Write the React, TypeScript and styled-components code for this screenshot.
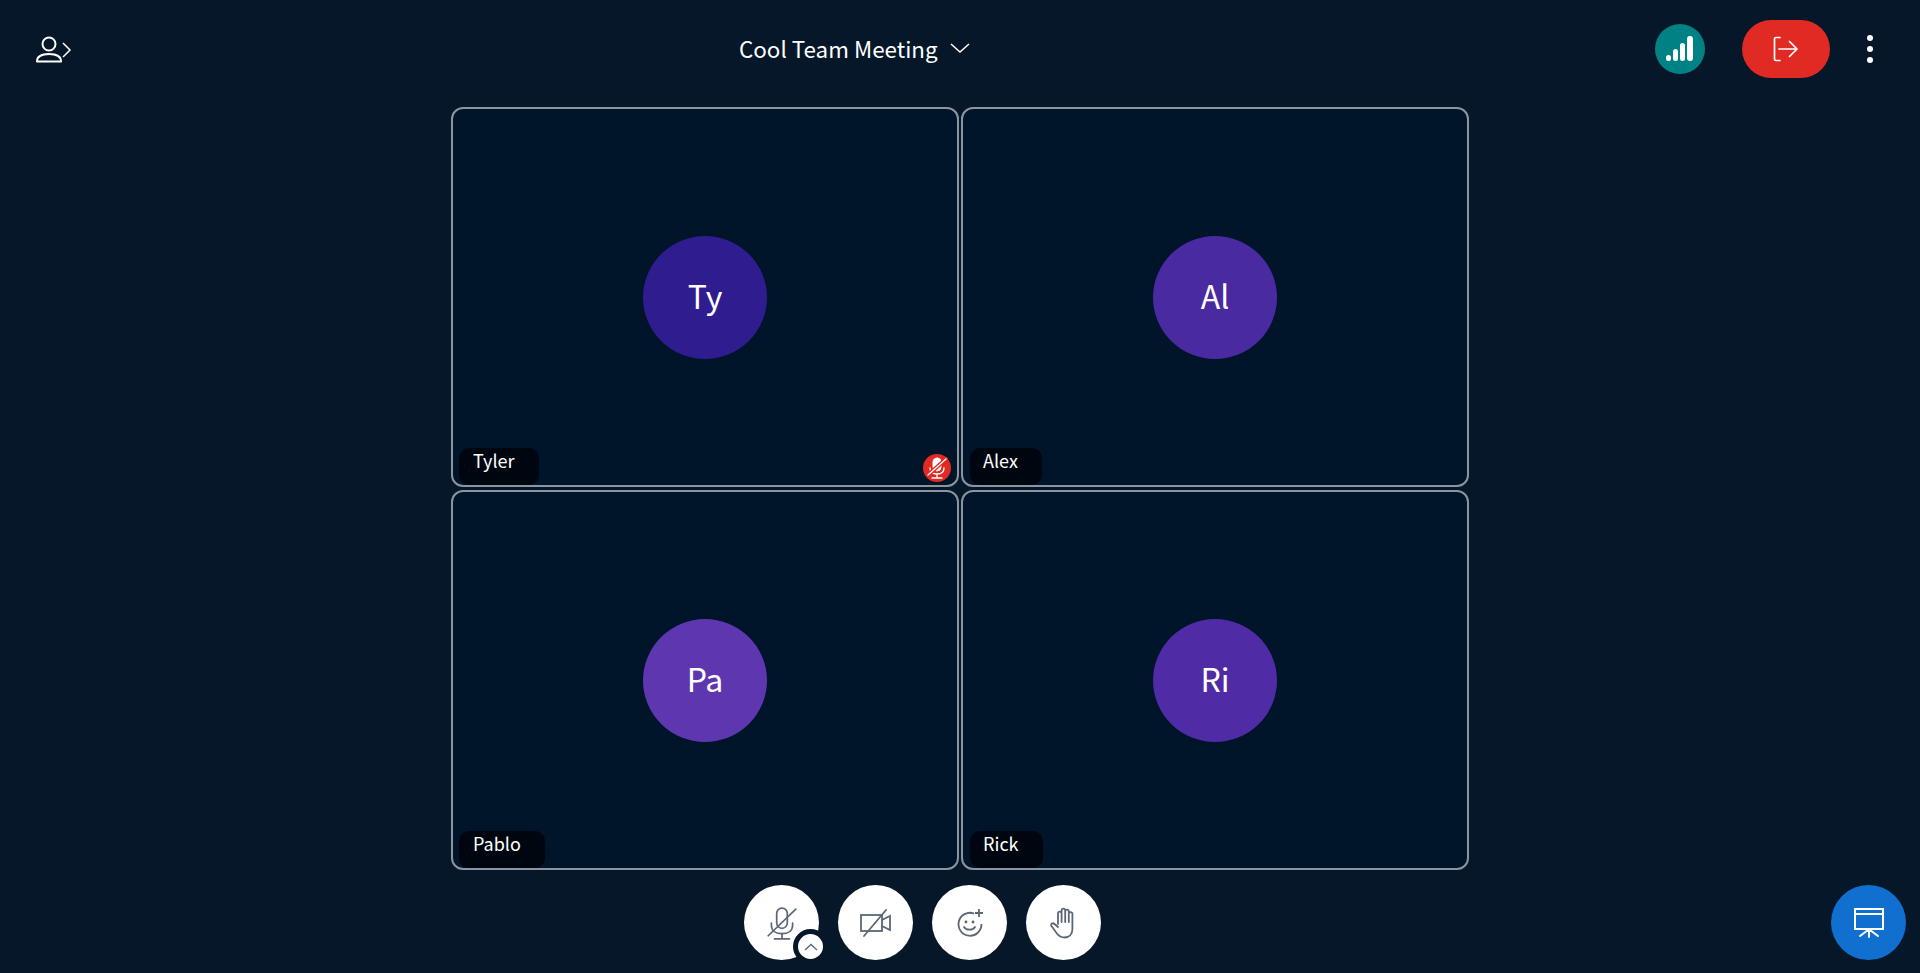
import styled, { createGlobalStyle } from 'styled-components';

const Global = createGlobalStyle`
    html, body {
        margin: 0;
        height: 100%;
        background: #06172a;
        font-family: "Noto Sans CJK SC", "Noto Sans", sans-serif;
    }
    #root { height: 100%; }
`;

const Page = styled.div`
    display: flex;
    flex-direction: column;
    height: 973px;
    overflow: hidden;
    background: #06172a;
    color: #fff;
`;

const TopBar = styled.header`
    display: flex;
    align-items: center;
    height: 100px;
    margin-bottom: 7px;
    padding: 0 47px 0 36px;
    box-sizing: border-box;
    flex: none;
`;

const UsersToggle = styled.button`
    display: flex;
    width: 36px;
    height: 30px;
    padding: 0;
    border: 0;
    background: none;
    color: #fff;
`;

const MeetingTitle = styled.div`
    display: flex;
    align-items: center;
    gap: 11px;
    margin-left: 667px;
    margin-top: -5px;
    font-size: 22.4px;
    line-height: 30px;
`;

const RightGroup = styled.div`
    display: flex;
    align-items: center;
    margin-left: auto;
    margin-top: -2px;
`;

const SignalBadge = styled.div`
    display: flex;
    align-items: center;
    justify-content: center;
    width: 50px;
    height: 50px;
    margin-right: 1px;
    border-radius: 50%;
    background: #008183;
`;

const LeaveButton = styled.button`
    display: flex;
    align-items: center;
    justify-content: center;
    width: 88px;
    height: 58px;
    margin-left: 36px;
    padding: 0;
    border: 0;
    border-radius: 29px;
    background: #e12a23;
`;

const MoreButton = styled.button`
    display: flex;
    flex-direction: column;
    gap: 5px;
    margin-left: 37px;
    padding: 0;
    border: 0;
    background: none;
`;

const Dot = styled.span`
    width: 6px;
    height: 6px;
    border-radius: 50%;
    background: #fff;
`;

const VideoGrid = styled.main`
    display: grid;
    grid-template-columns: 508px 508px;
    grid-template-rows: 380px 380px;
    gap: 3px 2px;
    justify-content: start;
    margin-left: 451px;
    flex: none;
`;

const Tile = styled.section`
    position: relative;
    display: flex;
    align-items: center;
    justify-content: center;
    box-sizing: border-box;
    border: 2px solid #8b95a1;
    border-radius: 12px;
    background: #00142a;
`;

const Avatar = styled.div<{ $color: string }>`
    display: flex;
    align-items: center;
    justify-content: center;
    width: 124px;
    height: 123px;
    padding-bottom: 4px;
    box-sizing: border-box;
    border-radius: 50%;
    background: ${p => p.$color};
    font-size: 32px;
`;

const NameTag = styled.div<{ $width: number; $right?: boolean }>`
    position: absolute;
    left: ${p => (p.$right ? 7 : 6)}px;
    bottom: 0;
    width: ${p => p.$width}px;
    height: 37px;
    padding-left: ${p => (p.$right ? 13 : 14)}px;
    box-sizing: border-box;
    border-radius: 10px;
    background: #00060f;
    font-size: 18px;
    line-height: 24px;
`;

const MuteBadge = styled.div`
    position: absolute;
    right: 6px;
    bottom: 3px;
    display: flex;
    align-items: center;
    justify-content: center;
    width: 28px;
    height: 28px;
    border-radius: 50%;
    background: #e12a23;
`;

const BottomBar = styled.footer`
    display: flex;
    align-items: center;
    justify-content: space-between;
    margin-top: 15px;
    padding: 0 14px 0 744px;
    flex: none;
`;

const Actions = styled.div`
    display: flex;
    gap: 19px;
`;

const RoundButton = styled.button<{ $primary?: boolean }>`
    position: relative;
    display: flex;
    align-items: center;
    justify-content: center;
    width: 75px;
    height: 75px;
    padding: 0;
    border: 0;
    border-radius: 50%;
    background: ${p => (p.$primary ? '#1170cf' : '#fff')};
`;

const AudioCaret = styled.span`
    position: absolute;
    right: -9px;
    bottom: -4px;
    display: flex;
    align-items: center;
    justify-content: center;
    width: 25px;
    height: 25px;
    border: 5px solid #06172a;
    border-radius: 50%;
    background: #fff;
`;

const GREY = '#5b6776';

function UserIcon() {
    return (
        <svg width="36" height="30" viewBox="0 0 36 30" fill="none" stroke="currentColor" strokeWidth="2">
            <circle cx="13" cy="9" r="6.5" />
            <path d="M1 26.5c0-5 5-7.5 12-7.5s12 2.500 12 7.500z" strokeLinejoin="round" />
            <path d="M27 8l7 7-7 7" strokeWidth="1.500" />
        </svg>
    );
}

function MicOffIcon() {
    return (
        <svg width="34" height="34" viewBox="0 0 32 32" fill="none" stroke={GREY} strokeWidth="1.600" strokeLinecap="round">
            <rect x="11" y="2" width="10" height="19" rx="5" />
            <path d="M6 16v2c0 5.500 4.500 8 10 8s10-2.500 10-8v-2" />
            <path d="M16 26v4M9 31h14" />
            <path d="M3 28L29 3" />
        </svg>
    );
}

function MutedIcon() {
    return (
        <svg width="22" height="22" viewBox="0 0 22 22" fill="none" stroke="#fff" strokeLinecap="round">
            <rect x="7" y="1" width="8" height="13" rx="4" fill="#fff" strokeWidth="1" />
            <path d="M4 11c0 4 3 6 7 6s7-2 7-6" strokeWidth="1.300" />
            <path d="M11 17v3M6 21h10" strokeWidth="1.300" />
            <path d="M2 18L20 2" stroke="#e12a23" strokeWidth="4" />
            <path d="M2 18L20 2" strokeWidth="1.300" />
        </svg>
    );
}

export default function App() {
    return (
        <Page>
            <Global />
            <TopBar>
                <UsersToggle><UserIcon /></UsersToggle>
                <MeetingTitle>
                    Cool Team Meeting
                    <svg width="22" height="12" viewBox="0 0 22 12" fill="none" stroke="#fff" strokeWidth="1.500">
                        <path d="M2 2l9 8 9-8" />
                    </svg>
                </MeetingTitle>
                <RightGroup>
                    <SignalBadge>
                        <svg width="28" height="28" viewBox="0 0 28 28" fill="#fff">
                            <rect x="0" y="20" width="5" height="6" rx="2.500" />
                            <rect x="7" y="14" width="5" height="12" rx="2.500" />
                            <rect x="14" y="8" width="5" height="18" rx="2.500" />
                            <rect x="21" y="1" width="6" height="25" rx="3" />
                        </svg>
                    </SignalBadge>
                    <LeaveButton>
                        <svg width="26" height="26" viewBox="0 0 26 26" fill="none" stroke="#fff" strokeWidth="1.700" strokeLinecap="round" strokeLinejoin="round">
                            <path d="M7 1.500H3a1.500 1.500 0 0 0-1.500 1.500v20A1.500 1.500 0 0 0 3 24.500h4" />
                            <path d="M6 13h18M16.500 5.500L24 13l-7.500 7.500" />
                        </svg>
                    </LeaveButton>
                    <MoreButton><Dot /><Dot /><Dot /></MoreButton>
                </RightGroup>
            </TopBar>

            <VideoGrid>
                <Tile>
                    <Avatar $color="#2f1d90">Ty</Avatar>
                    <NameTag $width={80}>Tyler</NameTag>
                    <MuteBadge><MutedIcon /></MuteBadge>
                </Tile>
                <Tile>
                    <Avatar $color="#4a2aa0">Al</Avatar>
                    <NameTag $width={72} $right>Alex</NameTag>
                </Tile>
                <Tile>
                    <Avatar $color="#5e37b0">Pa</Avatar>
                    <NameTag $width={86}>Pablo</NameTag>
                </Tile>
                <Tile>
                    <Avatar $color="#4f2ba5">Ri</Avatar>
                    <NameTag $width={73} $right>Rick</NameTag>
                </Tile>
            </VideoGrid>

            <BottomBar>
                <Actions>
                    <RoundButton>
                        <MicOffIcon />
                        <AudioCaret>
                            <svg width="14" height="8" viewBox="0 0 14 8" fill="none" stroke={GREY} strokeWidth="1.300">
                                <path d="M1 7l6-5.500L13 7" />
                            </svg>
                        </AudioCaret>
                    </RoundButton>
                    <RoundButton>
                        <svg width="32" height="28" viewBox="0 0 32 28" fill="none" stroke={GREY} strokeWidth="1.800">
                            <rect x="1" y="6" width="21" height="16" />
                            <path d="M22 11l8-4v14l-8-4" />
                            <path d="M4 27L26 1" strokeLinecap="round" />
                        </svg>
                    </RoundButton>
                    <RoundButton>
                        <svg width="28" height="28" viewBox="0 0 28 28" fill="none" stroke={GREY} strokeWidth="1.800">
                            <path d="M18 4.500A11.500 11.500 0 1 0 25.500 15" />
                            <circle cx="10" cy="13" r="1.400" fill={GREY} stroke="none" />
                            <circle cx="17" cy="13" r="1.400" fill={GREY} stroke="none" />
                            <path d="M8 18c2 3.500 9 3.500 11 0" strokeLinecap="round" />
                            <path d="M23 0v8M19 4h8" />
                        </svg>
                    </RoundButton>
                    <RoundButton>
                        <svg width="28" height="32" viewBox="0 0 28 32" fill="none" stroke={GREY} strokeWidth="1.800" strokeLinecap="round" strokeLinejoin="round">
                            <path d="M8 17V6.500a1.800 1.800 0 0 1 3.600 0V15M11.600 15V3.500a1.800 1.800 0 0 1 3.600 0V15M15.200 15V4.500a1.800 1.800 0 0 1 3.600 0V15M18.800 15V7a1.800 1.800 0 0 1 3.600 0v15c0 5-3 8.500-8 8.500-3.500 0-5.500-1.500-7.500-4L1.500 19c-1.200-2 1.300-3.700 3-2L8 20" />
                        </svg>
                    </RoundButton>
                </Actions>
                <RoundButton $primary>
                    <svg width="32" height="32" viewBox="0 0 32 32" fill="none" stroke="#fff" strokeWidth="2">
                        <rect x="2" y="2" width="28" height="20" />
                        <path d="M2 7h28" />
                        <path d="M16 22v8M15 23l-8 6M17 23l8 6" strokeLinecap="round" />
                    </svg>
                </RoundButton>
            </BottomBar>
        </Page>
    );
}
